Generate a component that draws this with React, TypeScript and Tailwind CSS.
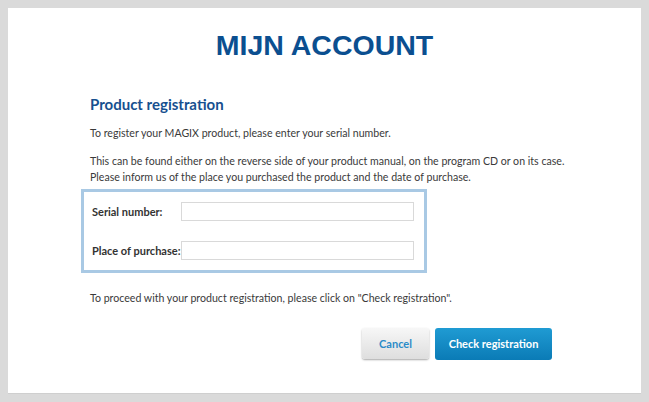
export default function App() {
	return (
		<div
			className="h-[402px] w-[649px] bg-[#dadada] pt-2"
			style={{ fontFamily: 'Lato, "Liberation Sans", Arial, sans-serif' }}
		>
			<div className="mx-2 h-[385px] bg-white pt-[21px] shadow-[0_1px_0_#cfcfcf]">
				<h1 className="text-center font-['Liberation_Sans',Arial,sans-serif] text-[28.5px] font-bold leading-8 text-[#0b4f90]">
					MIJN ACCOUNT
				</h1>

				<div className="mt-[34px] pl-[73px] pr-[89px] text-[10.6px] leading-4 text-[#3a3a3a]">
					<div className="pl-[9px]">
						<h2 className="text-[15px] font-bold leading-[18px] text-[#17508f]">
							Product registration
						</h2>
						<p className="mt-[12px] whitespace-nowrap">
							To register your MAGIX product, please enter your serial number.
						</p>
						<p className="mt-[12px] whitespace-nowrap">
							This can be found either on the reverse side of your product manual, on
							the program CD or on its case.
							<br />
							Please inform us of the place you purchased the product and the date of
							purchase.
						</p>
					</div>

					<div className="mt-[4px] w-[346px] border-[3px] border-[#a9c9e4] py-[10px] pl-2 pr-[10px] text-[11px]">
						<div className="flex h-[19px] items-center">
							<label className="w-[89px] shrink-0 font-bold text-[#333]">
								Serial number:
							</label>
							<input
								type="text"
								className="h-[19px] flex-1 border border-[#d9d9d9] bg-white outline-none"
							/>
						</div>
						<div className="mt-5 flex h-[19px] items-center">
							<label className="w-[89px] shrink-0 whitespace-nowrap font-bold text-[#333]">
								Place of purchase:
							</label>
							<input
								type="text"
								className="h-[19px] flex-1 border border-[#d9d9d9] bg-white outline-none"
							/>
						</div>
					</div>

					<p className="mt-[17px] whitespace-nowrap pl-[9px]">
						To proceed with your product registration, please click on "Check
						registration".
					</p>

					<div className="mt-[22px] flex justify-end gap-[6px]">
						<button className="h-[31px] w-[67px] rounded-[3px] bg-gradient-to-b from-[#f7f7f7] to-[#dedede] text-[11px] font-bold text-[#2b8bc8] shadow-[0_1px_2px_rgba(0,0,0,0.35)]">
							Cancel
						</button>
						<button className="h-[32px] w-[117px] rounded-[3px] bg-gradient-to-b from-[#1f9bd3] to-[#0a7bb6] text-[11px] font-bold text-white">
							Check registration
						</button>
					</div>
				</div>
			</div>
		</div>
	);
}
